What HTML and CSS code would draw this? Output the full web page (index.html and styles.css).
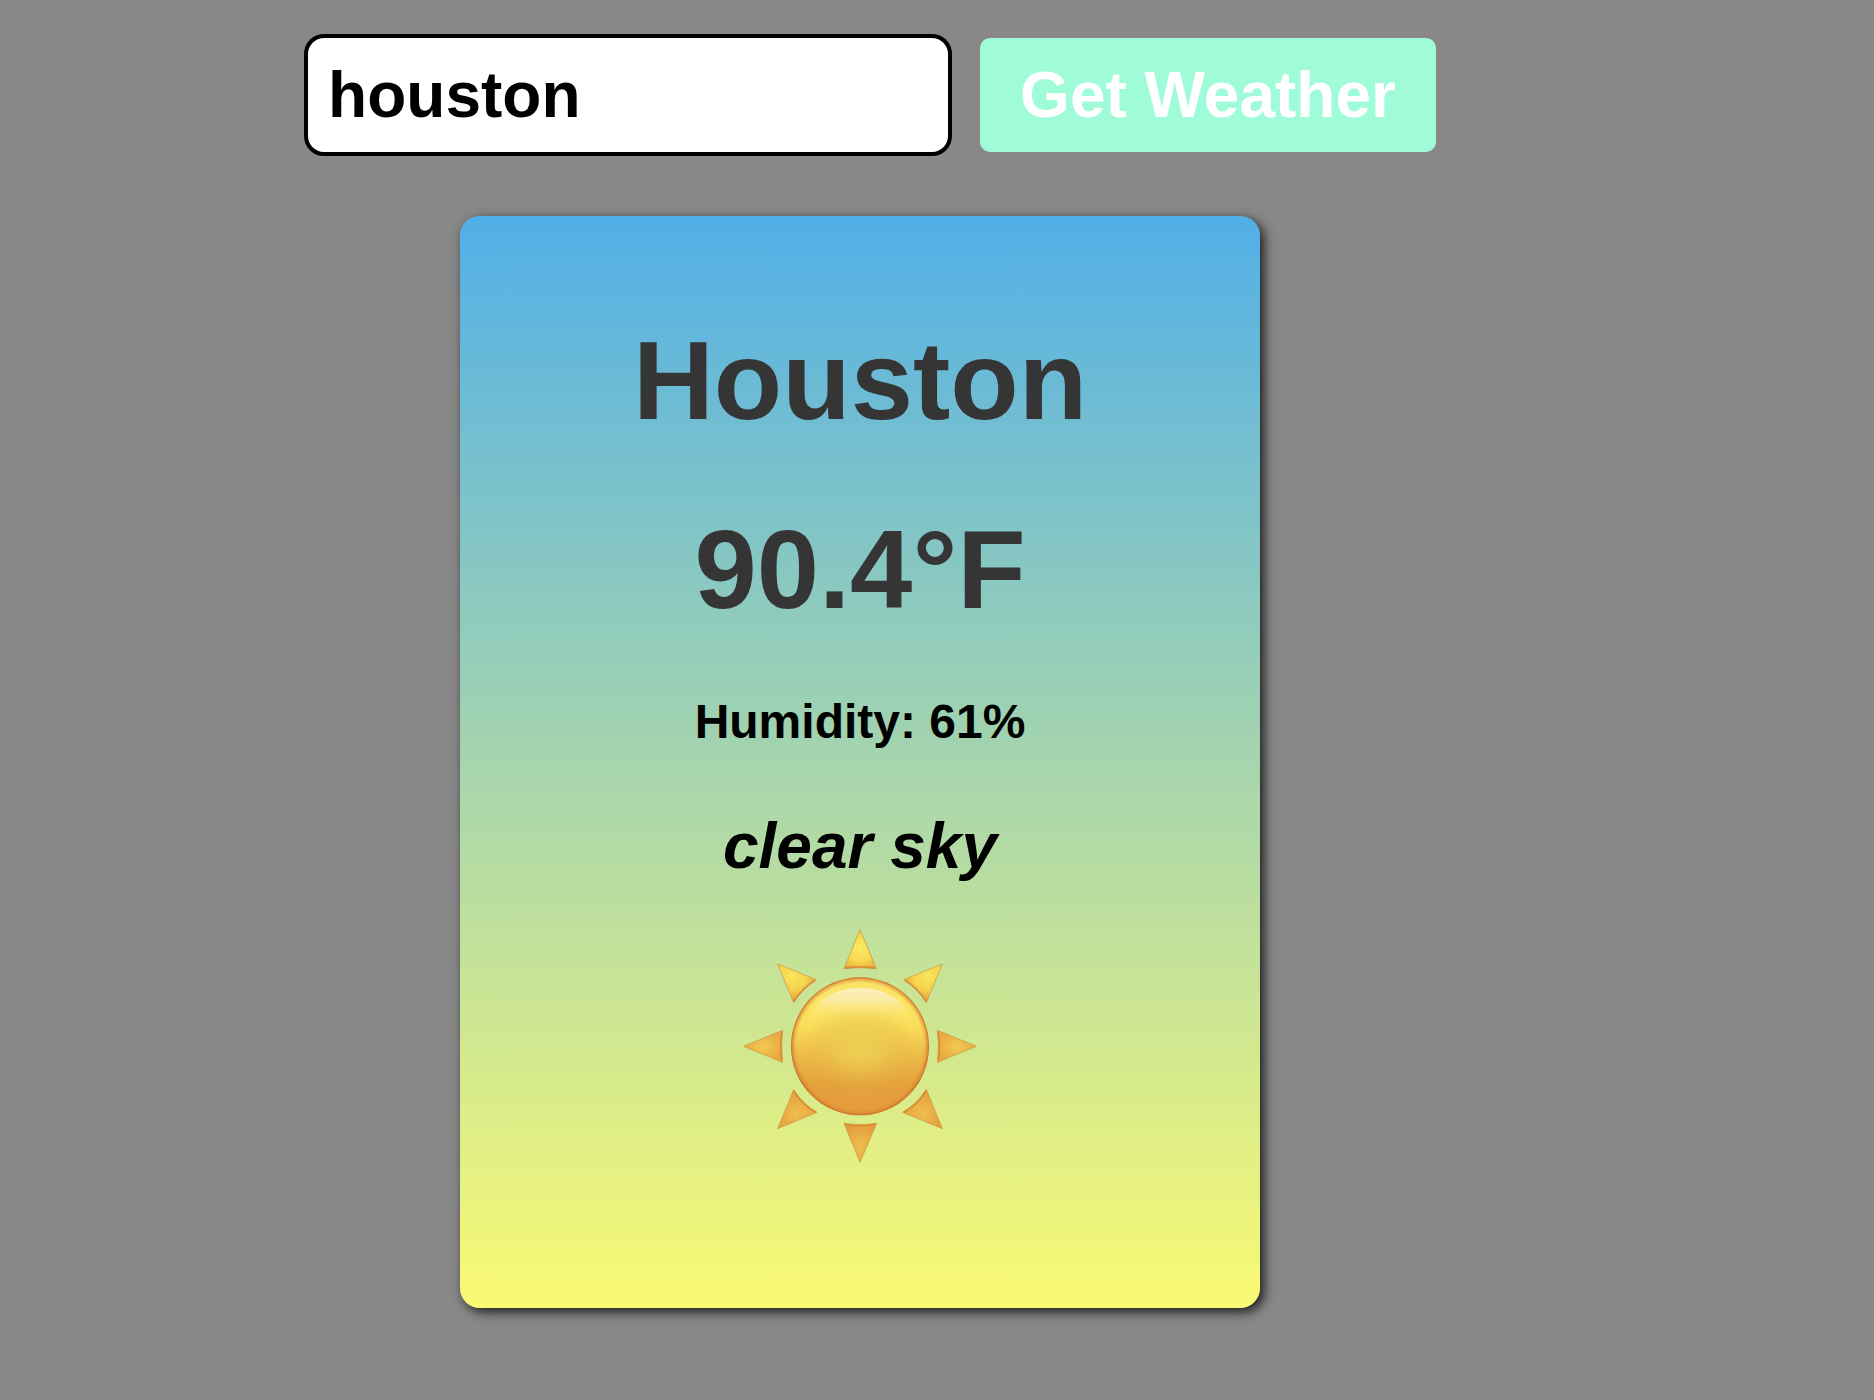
FILE: index.html
```html
<!DOCTYPE html>
<html lang="en">
<head>
<meta charset="utf-8">
<meta name="viewport" content="width=device-width, initial-scale=1">
<title>Weather App</title>
<link rel="stylesheet" href="styles.css">
</head>
<body>
<main class="page">
  <form class="weather-form">
    <input class="city-input" type="text" name="city" value="houston" placeholder="Enter city" aria-label="City">
    <button class="submit-button" type="submit">Get Weather</button>
  </form>
  <section class="card">
    <div class="details">
      <h1 class="headline">Houston</h1>
      <p class="headline">90.4°F</p>
      <p class="humidity">Humidity: 61%</p>
      <p class="description">clear sky</p>
    </div>
    <svg class="sun" viewBox="40 42 702 702" role="img" aria-label="Sun">
      <defs>
        <linearGradient id="disc" x1="0" y1="0" x2="0" y2="1">
          <stop offset="0" stop-color="#f7e168"/>
          <stop offset=".15" stop-color="#fbe766"/>
          <stop offset=".36" stop-color="#f8de59"/>
          <stop offset=".54" stop-color="#efbf4c"/>
          <stop offset=".76" stop-color="#e4a23d"/>
          <stop offset="1" stop-color="#e69b3a"/>
        </linearGradient>
        <radialGradient id="glow" gradientUnits="userSpaceOnUse" cx="391" cy="400" r="130" gradientTransform="translate(391 0) scale(1.3 1) translate(-391 0)">
          <stop offset="0" stop-color="#eed052" stop-opacity=".95"/>
          <stop offset=".4" stop-color="#ebc950" stop-opacity=".75"/>
          <stop offset="1" stop-color="#e6b446" stop-opacity="0"/>
        </radialGradient>
        <radialGradient id="edge" gradientUnits="userSpaceOnUse" cx="391" cy="394" r="207">
          <stop offset=".92" stop-color="#d9832f" stop-opacity="0"/>
          <stop offset=".965" stop-color="#d9832f" stop-opacity=".45"/>
          <stop offset="1" stop-color="#c8672a"/>
        </radialGradient>
        <linearGradient id="shine" gradientUnits="userSpaceOnUse" x1="0" y1="219" x2="0" y2="325">
          <stop offset="0" stop-color="#fcf0c0"/>
          <stop offset=".35" stop-color="#fbecab" stop-opacity=".9"/>
          <stop offset="1" stop-color="#f9e25e" stop-opacity="0"/>
        </linearGradient>
        <radialGradient id="ray-top" gradientUnits="userSpaceOnUse" cx="391" cy="100" r="70">
          <stop offset="0" stop-color="#fbec62"/>
          <stop offset=".55" stop-color="#f7d951"/>
          <stop offset="1" stop-color="#e8ab40"/>
        </radialGradient>
        <radialGradient id="ray-upper-left" gradientUnits="userSpaceOnUse" cx="188" cy="180" r="90">
          <stop offset="0" stop-color="#fae55a"/>
          <stop offset=".5" stop-color="#f6d24e"/>
          <stop offset="1" stop-color="#dd8f38"/>
        </radialGradient>
        <radialGradient id="ray-upper-right" gradientUnits="userSpaceOnUse" cx="594" cy="180" r="90">
          <stop offset="0" stop-color="#fae55a"/>
          <stop offset=".5" stop-color="#f6d24e"/>
          <stop offset="1" stop-color="#dd8f38"/>
        </radialGradient>
        <radialGradient id="ray-side">
          <stop offset="0" stop-color="#f2ca50"/>
          <stop offset="1" stop-color="#e9a942"/>
        </radialGradient>
        <radialGradient id="ray-low" cx=".5" cy=".6" r=".6">
          <stop offset="0" stop-color="#efbf50"/>
          <stop offset="1" stop-color="#e59d3d"/>
        </radialGradient>
      </defs>
      <g stroke="#c99036" stroke-width="3" stroke-opacity=".65">
        <path fill="url(#ray-top)" d="M391 44L440 161Q391 155 343 161Z"/>
        <path fill="url(#ray-upper-left)" d="M144 147L260 194Q218 220 192 263Z"/>
        <path fill="url(#ray-upper-right)" d="M638 147L522 194Q564 220 590 263Z"/>
        <path fill="url(#ray-side)" d="M42 394L159 346Q153 394 159 442Z"/>
        <path fill="url(#ray-side)" d="M740 394L623 346Q630 394 623 442Z"/>
        <path fill="url(#ray-low)" d="M144 641L192 524Q218 567 262 592Z"/>
        <path fill="url(#ray-low)" d="M638 641L590 523Q563 567 519 592Z"/>
        <path fill="url(#ray-low)" d="M391 742L343 625Q391 634 441 625Z"/>
      </g>
      <g fill="none" stroke="#d9812f" stroke-width="5" stroke-opacity=".7">
        <path d="M346 158Q391 153 437 158"/>
        <path d="M256 196Q217 220 193 259"/>
        <path d="M526 196Q565 220 589 259"/>
        <path d="M156 350Q150 394 156 438"/>
        <path d="M626 350Q632 394 626 438"/>
        <path d="M193 528Q217 568 258 592"/>
        <path d="M589 528Q564 568 523 592"/>
        <path d="M346 628Q391 636 437 628"/>
      </g>
      <circle cx="391" cy="394" r="207" fill="url(#disc)"/>
      <circle cx="391" cy="394" r="207" fill="url(#glow)"/>
      <path fill="url(#shine)" d="M235 325C255 260 310 219 391 219S527 260 547 325Z"/>
      <circle cx="391" cy="394" r="207" fill="url(#edge)"/>
    </svg>
  </section>
</main>
</body>
</html>
```
FILE: styles.css
```css
* {
  box-sizing: border-box;
}

body {
  margin: 0;
  background: #888;
  color: #000;
  font-family: Arial, "Liberation Sans", sans-serif;
  font-weight: bold;
}

.page {
  display: flex;
  flex-direction: column;
  align-items: center;
  gap: 60px;
  padding: 34px 154px 60px 0;
}

.weather-form {
  display: flex;
  align-items: center;
  gap: 28px;
  padding-left: 20px;
}

.city-input {
  width: 648px;
  min-width: 0;
  padding: 20px;
  border: 4px solid #000;
  border-radius: 20px;
  background: #fff;
  color: inherit;
  font: inherit;
  font-size: 64px;
  line-height: 74px;
}

.submit-button {
  padding: 20px 40px;
  border: 0;
  border-radius: 10px;
  background: #a0fcd8;
  color: #fff;
  font: inherit;
  font-size: 64px;
  line-height: 74px;
  white-space: nowrap;
  cursor: pointer;
}

.card {
  display: flex;
  flex-direction: column;
  align-items: center;
  gap: 46px;
  width: 100%;
  max-width: 800px;
  padding: 100px 100px 145px;
  border-radius: 20px;
  background: linear-gradient(180deg, #51afe8, #fafa73);
  box-shadow: 4px 4px 12px rgba(0, 0, 0, 0.8);
  text-align: center;
}

.details {
  display: flex;
  flex-direction: column;
  gap: 60px;
}

.headline,
.humidity,
.description {
  margin: 0;
}

.headline {
  color: #353535;
  font-size: 112px;
  line-height: 129px;
}

.humidity {
  font-size: 48px;
  line-height: 55px;
}

.description {
  font-size: 64px;
  font-style: italic;
  line-height: 74px;
}

.sun {
  width: 234px;
  height: 234px;
}
```
